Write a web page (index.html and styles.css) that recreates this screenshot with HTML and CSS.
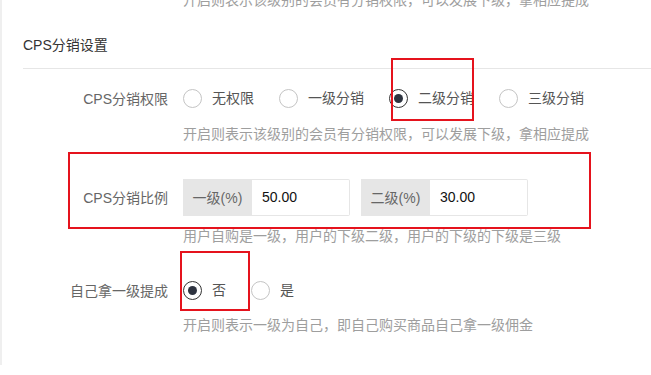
FILE: index.html
```html
<!DOCTYPE html>
<html lang="zh-CN">
<head>
<meta charset="utf-8">
<title>CPS分销设置</title>
<link rel="stylesheet" href="styles.css">
</head>
<body>
<div class="screen">
  <div class="page">
    <div class="hint hint-top">开启则表示该级别的会员有分销权限，可以发展下级，拿相应提成</div>
    <div class="section-title">CPS分销设置</div>

    <div class="form-row row-perm">
      <div class="label">CPS分销权限</div>
      <div class="radios">
        <label class="radio"><span class="circle"></span><span class="rtext">无权限</span></label>
        <label class="radio"><span class="circle"></span><span class="rtext">一级分销</span></label>
        <label class="radio checked"><span class="circle"></span><span class="rtext">二级分销</span></label>
        <label class="radio"><span class="circle"></span><span class="rtext">三级分销</span></label>
      </div>
    </div>
    <div class="hint hint-1">开启则表示该级别的会员有分销权限，可以发展下级，拿相应提成</div>

    <div class="form-row row-ratio">
      <div class="label">CPS分销比例</div>
      <div class="groups">
        <div class="input-group">
          <span class="addon">一级(%)</span>
          <span class="input">50.00</span>
        </div>
        <div class="input-group">
          <span class="addon">二级(%)</span>
          <span class="input">30.00</span>
        </div>
      </div>
    </div>
    <div class="hint hint-2">用户自购是一级，用户的下级二级，用户的下级的下级是三级</div>

    <div class="form-row row-self">
      <div class="label">自己拿一级提成</div>
      <div class="radios">
        <label class="radio checked"><span class="circle"></span><span class="rtext">否</span></label>
        <label class="radio"><span class="circle"></span><span class="rtext">是</span></label>
      </div>
    </div>
    <div class="hint hint-3">开启则表示一级为自己，即自己购买商品自己拿一级佣金</div>
  </div>

  <div class="mark mark-1"></div>
  <div class="mark mark-2"></div>
  <div class="mark mark-3"></div>
</div>
</body>
</html>
```

FILE: styles.css
```css
html, body {
  margin: 0;
  padding: 0;
  background: #fff;
}

body {
  font-family: "Liberation Sans", "Noto Sans CJK SC", sans-serif;
  font-size: 14px;
  color: #666;
}

.screen {
  position: relative;
  width: 651px;
  height: 375px;
  overflow: hidden;
}

.page {
  border-left: 2px solid #efefef;
  height: 375px;
  padding-left: 21px;
  box-sizing: border-box;
}

.hint {
  line-height: 20px;
  height: 20px;
  padding-left: 160px;
  color: #9e9e9e;
  white-space: nowrap;
}

.hint-top { margin-top: -10px; }

.section-title {
  margin-top: 25px;
  line-height: 20px;
  padding-bottom: 13px;
  border-bottom: 1px solid #e6e6e6;
  color: #333;
}

.form-row {
  display: flex;
  align-items: center;
  height: 36px;
}

.label {
  width: 145px;
  margin-right: 15px;
  text-align: right;
  color: #666;
  white-space: nowrap;
}

.row-perm { margin-top: 11px; }
.hint-1 { margin-top: 8px; }
.row-ratio { margin-top: 35px; }
.hint-2 { margin-top: 11px; }
.row-self { margin-top: 26px; }
.hint-3 { margin-top: 7px; }

.radios {
  display: flex;
  align-items: center;
}

.radio {
  display: flex;
  align-items: center;
  margin-right: 25px;
  color: #555;
}

.circle {
  width: 19px;
  height: 19px;
  box-sizing: border-box;
  border: 1px solid #c4c4c4;
  border-radius: 50%;
  margin-right: 10px;
  display: flex;
  align-items: center;
  justify-content: center;
}

.radio.checked .circle {
  border-color: #333;
}

.radio.checked .circle::after {
  content: "";
  width: 9px;
  height: 9px;
  border-radius: 50%;
  background: #2e3440;
}

.rtext { line-height: 20px; }

.groups {
  display: flex;
  gap: 11px;
}

.input-group {
  display: flex;
  height: 37px;
}

.addon {
  width: 69px;
  background: #e6e6e6;
  color: #666;
  display: flex;
  align-items: center;
  justify-content: center;
}

.input {
  width: 98px;
  box-sizing: border-box;
  border: 1px solid #e6e6e6;
  border-left: none;
  border-radius: 0 2px 2px 0;
  padding-left: 10px;
  color: #111;
  display: flex;
  align-items: center;
}

.mark {
  position: absolute;
  border: 2px solid #e5131d;
  box-sizing: border-box;
}

.mark-1 { left: 391px; top: 58px; width: 83px; height: 63px; }
.mark-2 { left: 68px; top: 152px; width: 523px; height: 77px; }
.mark-3 { left: 180px; top: 251px; width: 70px; height: 60px; }
```
